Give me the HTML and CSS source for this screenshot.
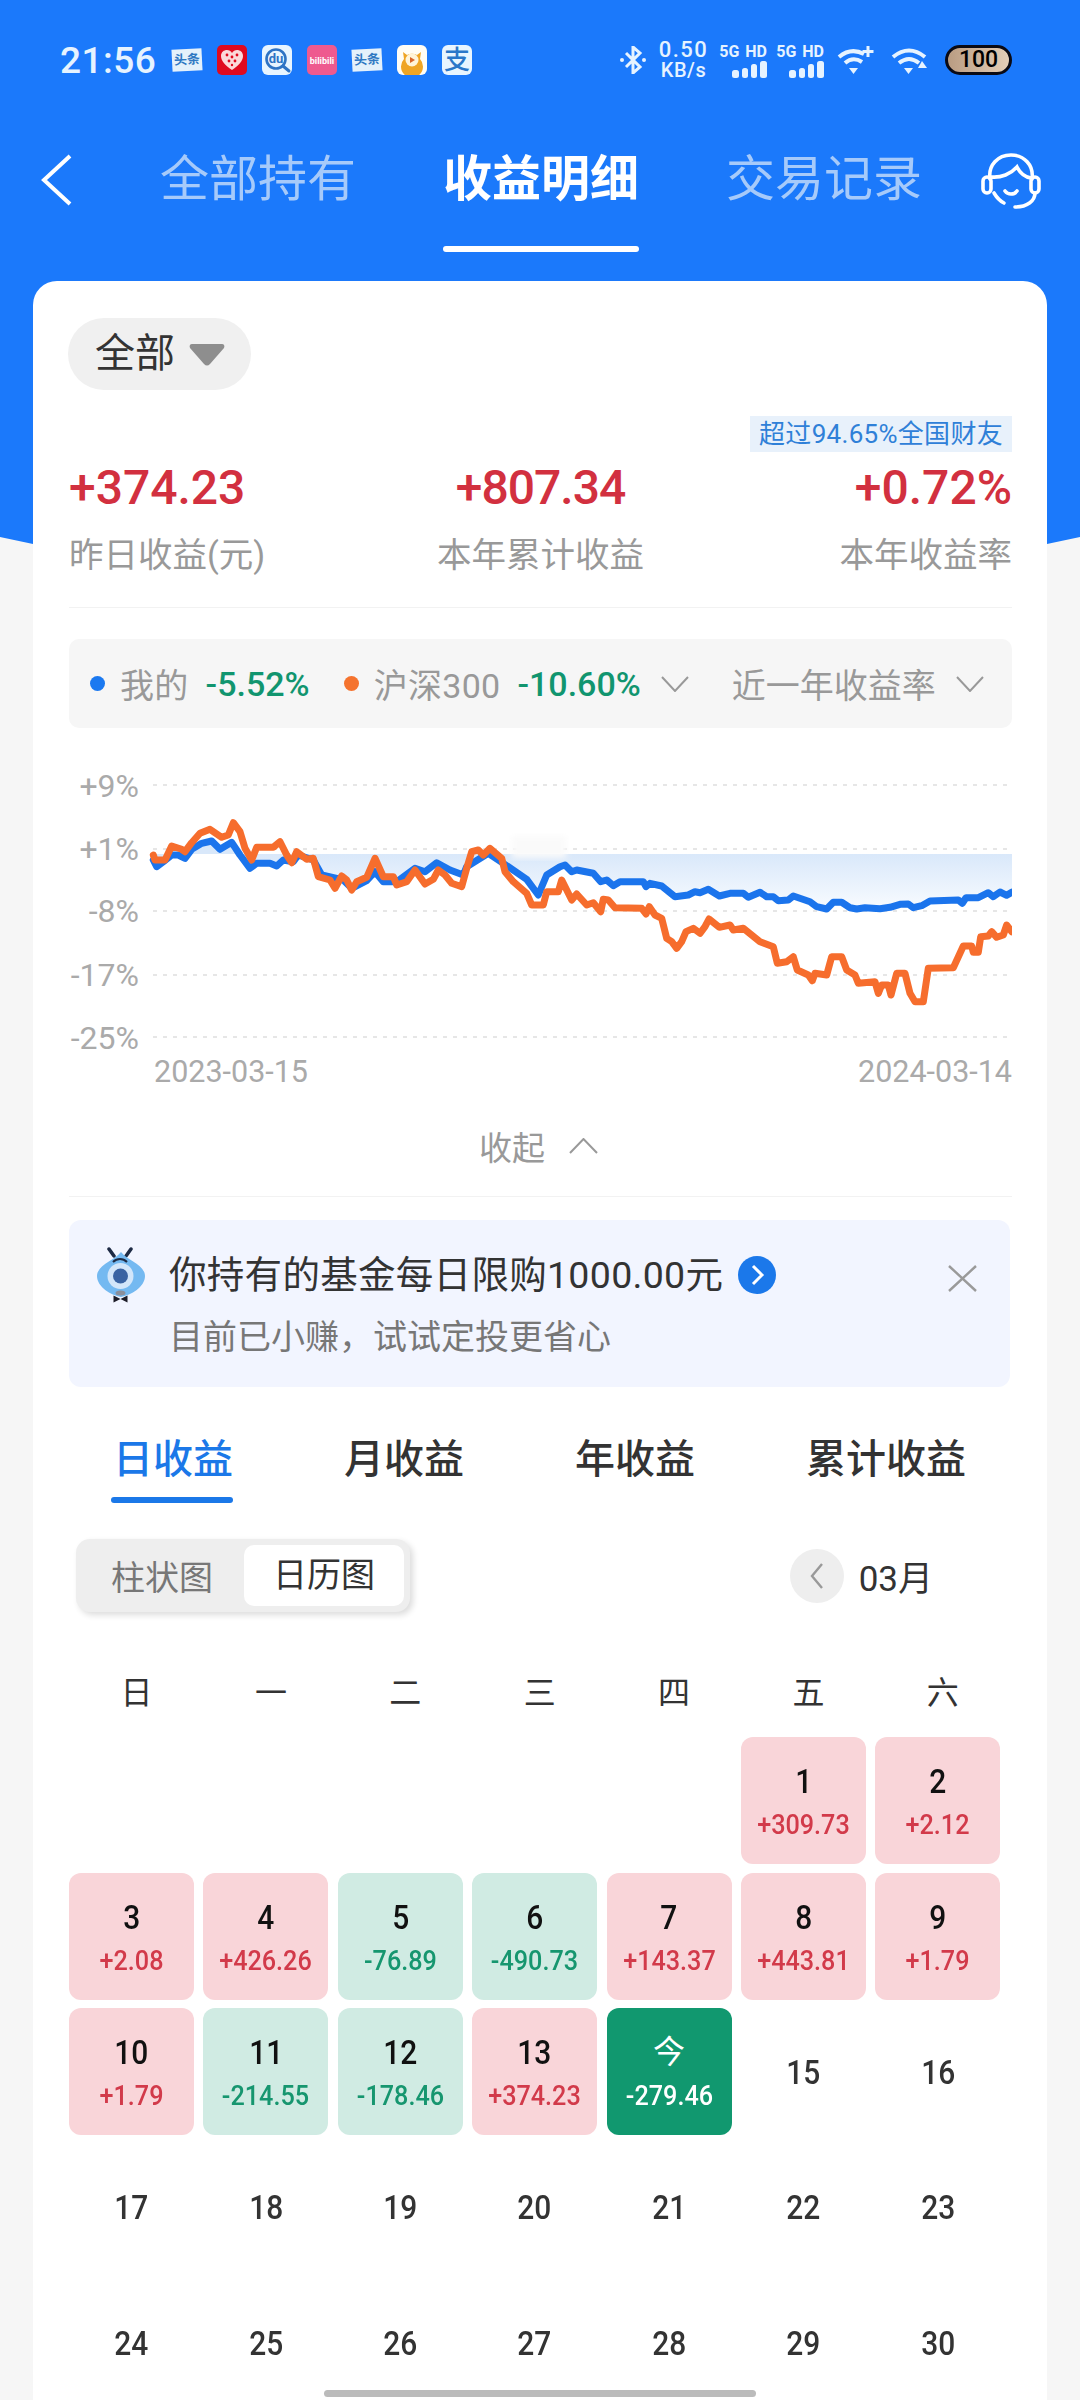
FILE: index.html
```html
<!DOCTYPE html>
<html lang="zh-CN">
<head>
    <meta charset="UTF-8">
    <meta name="viewport" content="width=device-width, initial-scale=1.0">
    <title>收益明细</title>
    <link rel="stylesheet" href="styles.css">
</head>
<body>
    <div class="header-bg"></div>

    <!-- Status bar -->
    <div class="status-bar">
        <span class="time">21:56</span>
        <div class="app-icons">
            <span class="toutiao">头条</span>
            <svg class="app-icon" viewBox="0 0 30 30"><rect width="30" height="30" rx="5" fill="#e00a1e"/><path d="M15 25C8 20 4 16 4 11c0-4 3-6 6-6 2 0 4 1 5 3 1-2 3-3 5-3 3 0 6 2 6 6 0 5-4 9-11 14z" fill="#fbdada"/><g fill="#e00a1e"><circle cx="10" cy="10" r="1.4"/><circle cx="15" cy="12" r="1.4"/><circle cx="20" cy="10" r="1.4"/><circle cx="12" cy="16" r="1.4"/><circle cx="18" cy="16" r="1.4"/><circle cx="15" cy="20" r="1.2"/></g></svg>
            <svg class="app-icon" viewBox="0 0 30 30"><rect width="30" height="30" rx="6" fill="#e8f5ff"/><circle cx="14" cy="14" r="9.5" fill="none" stroke="#2e73c4" stroke-width="2.6"/><path d="M21 21l6 5" stroke="#2e73c4" stroke-width="3" stroke-linecap="round"/><text x="14" y="18" text-anchor="middle" class="du-text">du</text></svg>
            <svg class="app-icon" viewBox="0 0 30 30"><rect width="30" height="30" rx="5" fill="#ee5a8f"/><text x="15" y="19" text-anchor="middle" class="bili-text">bilibili</text></svg>
            <span class="toutiao">头条</span>
            <svg class="app-icon" viewBox="0 0 30 30"><rect width="30" height="30" rx="6" fill="#fffdf5"/><path d="M6 7l4 3a11 11 0 0 1 10 0l4-3-1 7a11 11 0 1 1-16 0z" fill="#efa524"/><circle cx="15" cy="15" r="6.5" fill="#fff4d8"/><path d="M13 12l5 3-5 3z" fill="#d9652a"/></svg>
            <svg class="app-icon" viewBox="0 0 30 30"><rect width="30" height="30" rx="6" fill="#e8f5ff"/><text x="15" y="24" text-anchor="middle" class="zhi-text">支</text></svg>
        </div>
        <div class="status-right">
            <svg class="bt" viewBox="0 0 26 28"><path d="M6 7l14 14-7 6V1l7 6L6 21" fill="none" stroke="#e6f3ff" stroke-width="3"/><circle cx="2" cy="14" r="2" fill="#e6f3ff"/><circle cx="24" cy="14" r="2" fill="#e6f3ff"/></svg>
            <div class="speed"><span>0.50</span><span class="speed-unit">KB/s</span></div>
            <div class="signal">
                <span class="signal-label">5G HD</span>
                <svg class="bars" viewBox="0 0 35 17"><rect x="0" y="9" width="7" height="8" rx="2.5"/><rect x="10" y="7" width="6" height="10" rx="2.5"/><rect x="19" y="3" width="6" height="14" rx="2.5"/><rect x="28" y="0" width="7" height="17" rx="2.5"/></svg>
            </div>
            <div class="signal">
                <span class="signal-label">5G HD</span>
                <svg class="bars" viewBox="0 0 35 17"><rect x="0" y="9" width="7" height="8" rx="2.5"/><rect x="10" y="7" width="6" height="10" rx="2.5"/><rect x="19" y="3" width="6" height="14" rx="2.5"/><rect x="28" y="0" width="7" height="17" rx="2.5"/></svg>
            </div>
            <svg class="wifi-plus" viewBox="0 0 37 29"><path d="M2 11Q14 1 27 8M8 17Q16 10 25 16" fill="none" stroke="#e6f3ff" stroke-width="4"/><path d="M12 22h9l-4.500 6z" fill="#e6f3ff"/><path d="M31 0v11M25.500 5.500h11" stroke="#e6f3ff" stroke-width="3"/></svg>
            <svg class="wifi" viewBox="0 0 36 29"><path d="M2 11Q18 -2 34 11M8 17Q18 9 28 17" fill="none" stroke="#e6f3ff" stroke-width="4"/><path d="M13 22h9l-4.500 6z" fill="#e6f3ff"/><path d="M31 15l5 7h-9z" fill="#e6f3ff"/></svg>
            <div class="battery">100</div>
        </div>
    </div>

    <!-- Top navigation -->
    <div class="nav">
        <svg class="back" viewBox="0 0 31 52"><path d="M29 2L3 26l26 24" fill="none" stroke="#fff" stroke-width="4"/></svg>
        <div class="nav-tabs">
            <span class="nav-tab">全部持有</span>
            <span class="nav-tab active">收益明细</span>
            <span class="nav-tab">交易记录</span>
        </div>
        <svg class="headset" viewBox="0 0 60 56"><g fill="none" stroke="#fff" stroke-width="3.600" stroke-linecap="round"><path d="M9 26C7 12 17 2 30 2s23 10 21 24"/><path d="M10 24h0c10 1 20-3 26-10 3 6 8 10 14 11"/><rect x="2" y="24" width="8" height="16" rx="4"/><rect x="50" y="24" width="8" height="16" rx="4"/><path d="M13 40c3 5 6 8 10 10"/><path d="M54 40c0 8-8 14-20 14"/><path d="M24 38c3 4 9 4 12 0"/></g></svg>
    </div>

    <div class="card">
        <div class="filter-pill">
            <span>全部</span>
            <svg class="filter-arrow" viewBox="0 0 36 23"><path d="M3 1h30c2 0 3 2 2 4L21 21c-2 2-4 2-6 0L1 5C0 3 1 1 3 1z" fill="#8e8e8e"/></svg>
        </div>

        <div class="rank-row"><span class="rank-badge">超过94.65%全国财友</span></div>

        <div class="stats">
            <div class="stat">
                <div class="stat-value">+374.23</div>
                <div class="stat-label">昨日收益(元)</div>
            </div>
            <div class="stat center">
                <div class="stat-value">+807.34</div>
                <div class="stat-label">本年累计收益</div>
            </div>
            <div class="stat right">
                <div class="stat-value">+0.72%</div>
                <div class="stat-label">本年收益率</div>
            </div>
        </div>

        <!-- Legend above the chart -->
        <div class="legend">
            <i class="dot blue"></i>
            <span class="legend-name">我的</span>
            <span class="legend-value">-5.52%</span>
            <i class="dot orange"></i>
            <span class="legend-name">沪深300</span>
            <span class="legend-value">-10.60%</span>
            <svg class="legend-chevron first" viewBox="0 0 28 16"><path d="M1 1l13 14L27 1" fill="none" stroke="#999" stroke-width="2"/></svg>
            <span class="legend-name period">近一年收益率</span>
            <svg class="legend-chevron" viewBox="0 0 28 16"><path d="M1 1l13 14L27 1" fill="none" stroke="#999" stroke-width="2"/></svg>
        </div>

        <!-- Chart: the viewBox uses page coordinates -->
        <svg class="chart" viewBox="69 760 943 340">
            <defs>
                <linearGradient id="areaFill" gradientUnits="userSpaceOnUse" x1="0" y1="854" x2="0" y2="914">
                    <stop offset="0" stop-color="#d9e8fa"/>
                    <stop offset="1" stop-color="#fbfdff"/>
                </linearGradient>
                <filter id="soft"><feGaussianBlur stdDeviation="3"/></filter>
            </defs>
            <g class="grid">
                <line x1="153" y1="785" x2="1012" y2="785"/>
                <line x1="153" y1="849" x2="1012" y2="849"/>
                <line x1="153" y1="911" x2="1012" y2="911"/>
                <line x1="153" y1="975" x2="1012" y2="975"/>
                <line x1="153" y1="1037" x2="1012" y2="1037"/>
            </g>
            <polygon fill="url(#areaFill)" points="153,854 153,860 156.700,866.700 163.300,861.700 171.700,855 178.300,855 185,858.300 191.700,849.300 201.700,843.300 211.700,841 220,849.300 231.700,842.300 240,855 250,868.300 256.700,863.300 270,863.300 276.700,866 283.300,860 293.300,861.700 298.300,855 313.300,860 321.700,875 343.300,880 351.700,888.300 366.700,880.700 375,871.700 383.300,881.700 396.700,881.700 415,868.300 425,871.700 436.700,862.700 450,870 463.300,875 466.700,866.700 488.300,853.300 508.300,866.700 526.700,879.300 538.300,895 546.700,875 560,866.700 571.700,871.700 576.700,870 593.300,873.300 600.700,881.700 606.700,880 613.300,885.700 620,881.700 643.300,881.700 646,886.700 650,883.300 661.700,886 675,896.700 688.300,895 695,891.700 700,892.700 708.300,889.300 719.300,896 730,893.300 743.300,893.300 748.300,897.300 760,892.300 766.700,896.700 773.300,896.700 778.300,900.700 788.300,900 793.300,896 810,901.700 816.700,906.700 826.700,909 833.300,902.300 841.700,902.300 850,907.700 856.700,909 865,907.700 880,908.700 890,907.300 900,904.300 908.300,904 913.300,907.700 921.700,905.700 930,901 958.300,900 962.300,903.300 966,897.700 978.300,897.700 988.300,892.700 993.300,896.700 1000,892 1006.700,895.300 1012,892.300 1012,854"/>
            <rect x="512" y="836" width="54" height="22" fill="#fafafa" filter="url(#soft)"/>
            <polyline class="line-blue" points="153.300,860 156.700,866.700 163.300,861.700 171.700,855 178.300,855 185,858.300 191.700,849.300 201.700,843.300 211.700,841 220,849.300 231.700,842.300 240,855 250,868.300 256.700,863.300 270,863.300 276.700,866 283.300,860 293.300,861.700 298.300,855 313.300,860 321.700,875 343.300,880 351.700,888.300 366.700,880.700 375,871.700 383.300,881.700 396.700,881.700 415,868.300 425,871.700 436.700,862.700 450,870 463.300,875 466.700,866.700 488.300,853.300 508.300,866.700 526.700,879.300 538.300,895 546.700,875 560,866.700 565,865 571.700,871.700 576.700,870 593.300,873.300 600.700,881.700 606.700,880 613.300,885.700 620,881.700 643.300,881.700 646,886.700 650,883.300 661.700,886 675,896.700 688.300,895 695,891.700 700,892.700 708.300,889.300 719.300,896 730,893.300 743.300,893.300 748.300,897.300 760,892.300 766.700,896.700 773.300,896.700 778.300,900.700 788.300,900 793.300,896 810,901.700 816.700,906.700 826.700,909 833.300,902.300 841.700,902.300 850,907.700 856.700,909 865,907.700 880,908.700 890,907.300 900,904.300 908.300,904 913.300,907.700 921.700,905.700 930,901 958.300,900 962.300,903.300 966,897.700 978.300,897.700 988.300,892.700 993.300,896.700 1000,892 1006.700,895.300 1011.700,892.300"/>
            <polyline class="line-orange" points="153.300,855 155,860 165,860 171.700,846 181.700,849.300 185,851.700 191.700,842.700 200,833.300 210,829.300 221.700,837.300 228.300,835 233.300,822.700 240,831.700 245,848.300 251.700,860 256.700,847.300 273.300,847.300 280,841.700 286.700,855 291.700,862.700 296.700,851.700 306.700,859.300 313.300,858.300 318.300,876.700 330,880 335,888.300 341.700,876 346.700,880 351.700,890 356.700,881.700 366.700,877.300 375,858.300 383.300,876.700 393.300,876.700 396.700,885 406.700,881.700 415,870 425,884 433.300,879.300 438.300,870 445,875 451.700,883.300 461.700,886.700 466.700,868.300 471.700,851.700 478.300,850 483.300,855 490,848.300 501.700,858.300 505,871.700 513.300,881.700 526.700,893.300 531.700,905 543.300,905 546.700,891.700 558.300,891.700 561.700,880 571.700,900 576.700,894 586.700,905 593.300,902.700 600.700,911.700 603.300,899.300 608.300,900 615,907.700 641.700,908.300 646,914 649.300,906.700 655,915 661.700,918.300 666.700,938.300 671.700,941.700 676.700,948.300 681.700,941.700 686,931.700 693.300,928.300 700,933.300 705,926.700 709,919 719.300,927.300 730,925 733.300,930 743.300,928.300 760,941.700 773.300,946.700 777.300,963.300 786.700,961.700 793.300,956.700 797.300,970 808.300,975 812.300,980.700 815,973.300 826.700,975 831.700,956.700 841.700,956.700 846.700,970 855,975 858.300,983.300 875,981.700 878.300,993.300 881.700,985 888.300,985 891,995 896.700,973.300 905,973.300 910,993.300 915,1001.700 923.300,1001.700 928.300,968.300 953.300,967.700 963.300,946 971.700,946 973.300,952.300 978.300,952.300 980.700,936.700 988.300,936 991.700,931.700 996.700,937.300 1003.300,935 1006.700,925 1011.700,931.700"/>
            <g class="axis-y">
                <text x="139" y="797">+9%</text>
                <text x="139" y="860">+1%</text>
                <text x="139" y="922">-8%</text>
                <text x="139" y="986">-17%</text>
                <text x="139" y="1049">-25%</text>
            </g>
            <text class="axis-date" x="154" y="1082">2023-03-15</text>
            <text class="axis-date end" x="1012" y="1082">2024-03-14</text>
        </svg>

        <div class="collapse-row">
            <span>收起</span>
            <svg class="collapse-icon" viewBox="0 0 29 16"><path d="M1 15L14.500 1 28 15" fill="none" stroke="#999" stroke-width="2"/></svg>
        </div>

        <!-- Purchase limit notice -->
        <div class="notice">
            <svg class="mascot" viewBox="0 0 48 56">
                <path d="M12 2l5 7M34 2l-5 7" stroke="#1d2a44" stroke-width="3.500" stroke-linecap="round"/>
                <path d="M24 5c6 8 24 13 24 24 0 11-14 19-24 21C14 48 0 40 0 29 0 18 18 13 24 5z" fill="#74b9f1"/>
                <path d="M16 15c4-4 10-4 14 0" fill="none" stroke="#1d2a44" stroke-width="2"/>
                <circle cx="23.500" cy="29" r="13" fill="#d3e6fa"/>
                <circle cx="23.500" cy="29" r="7.500" fill="#3a63a3"/>
                <ellipse cx="23.500" cy="46" rx="5" ry="2.500" fill="#8a8f9c"/>
                <path d="M23.500 52l-7-3.500v7zM23.500 52l7-3.500v7z" fill="#1c1c28"/>
            </svg>
            <div class="notice-text">
                <div class="notice-title">
                    <span>你持有的基金每日限购1000.00元</span>
                    <svg class="notice-go" viewBox="0 0 38 38"><circle cx="19" cy="19" r="19" fill="#1b78ea"/><path d="M15 10l9 9-9 9" fill="none" stroke="#fff" stroke-width="3"/></svg>
                </div>
                <div class="notice-sub">目前已小赚，试试定投更省心</div>
            </div>
            <svg class="notice-close" viewBox="0 0 29 27"><path d="M1 1l27 25M28 1L1 26" stroke="#9a9a9a" stroke-width="2.400"/></svg>
        </div>

        <div class="period-tabs">
            <span class="period-tab active">日收益</span>
            <span class="period-tab">月收益</span>
            <span class="period-tab">年收益</span>
            <span class="period-tab">累计收益</span>
        </div>

        <div class="view-row">
            <div class="segment">
                <span class="segment-item">柱状图</span>
                <span class="segment-item active">日历图</span>
            </div>
            <div class="month">
                <span class="month-prev"><svg viewBox="0 0 14 28"><path d="M12 2L2 14l10 12" fill="none" stroke="#999" stroke-width="2.400"/></svg></span>
                <span>03月</span>
            </div>
        </div>

        <div class="week">
            <span>日</span><span>一</span><span>二</span><span>三</span><span>四</span><span>五</span><span>六</span>
        </div>

        <div class="calendar">
            <div class="day blank"></div>
            <div class="day blank"></div>
            <div class="day blank"></div>
            <div class="day blank"></div>
            <div class="day blank"></div>
            <div class="day up"><b>1</b><em>+309.73</em></div>
            <div class="day up"><b>2</b><em>+2.12</em></div>
            <div class="day up"><b>3</b><em>+2.08</em></div>
            <div class="day up"><b>4</b><em>+426.26</em></div>
            <div class="day down"><b>5</b><em>-76.89</em></div>
            <div class="day down"><b>6</b><em>-490.73</em></div>
            <div class="day up"><b>7</b><em>+143.37</em></div>
            <div class="day up"><b>8</b><em>+443.81</em></div>
            <div class="day up"><b>9</b><em>+1.79</em></div>
            <div class="day up"><b>10</b><em>+1.79</em></div>
            <div class="day down"><b>11</b><em>-214.55</em></div>
            <div class="day down"><b>12</b><em>-178.46</em></div>
            <div class="day up"><b>13</b><em>+374.23</em></div>
            <div class="day today"><b>今</b><em>-279.46</em></div>
            <div class="day future"><b>15</b></div>
            <div class="day future"><b>16</b></div>
            <div class="day future"><b>17</b></div>
            <div class="day future"><b>18</b></div>
            <div class="day future"><b>19</b></div>
            <div class="day future"><b>20</b></div>
            <div class="day future"><b>21</b></div>
            <div class="day future"><b>22</b></div>
            <div class="day future"><b>23</b></div>
            <div class="day future"><b>24</b></div>
            <div class="day future"><b>25</b></div>
            <div class="day future"><b>26</b></div>
            <div class="day future"><b>27</b></div>
            <div class="day future"><b>28</b></div>
            <div class="day future"><b>29</b></div>
            <div class="day future"><b>30</b></div>
        </div>
    </div>

    <div class="home-bar"></div>
</body>
</html>
```

FILE: styles.css
```css
* {
    margin: 0;
    padding: 0;
    box-sizing: border-box;
    font-family: Roboto, "Noto Sans CJK SC", sans-serif;
}

body {
    position: relative;
    width: 1080px;
    height: 2400px;
    overflow: hidden;
    background: #f6f6f6;
    color: #333;
}

svg {
    display: block;
    flex-shrink: 0;
}

/* Blue backdrop behind status bar, nav and top of the card */
.header-bg {
    position: absolute;
    top: 0;
    left: 0;
    width: 1080px;
    height: 544px;
    background: #1b79fb;
    clip-path: polygon(0 0, 100% 0, 100% 537px, 1047px 544px, 33px 544px, 0 537px);
}

/* Status bar */
.status-bar {
    position: relative;
    display: flex;
    align-items: center;
    height: 120px;
    padding: 0 68px 0 60px;
    color: #e6f3ff;
}

.time {
    width: 97px;
    font-size: 37px;
    font-weight: 500;
    letter-spacing: .5px;
    white-space: nowrap;
}

.app-icons {
    display: flex;
    align-items: center;
    gap: 15px;
    margin-left: 15px;
}

.app-icon {
    width: 30px;
    height: 30px;
}

.toutiao {
    width: 30px;
    height: 22px;
    background: #e4f1fb;
    color: #2f78c2;
    font-size: 13px;
    font-weight: 700;
    line-height: 22px;
    text-align: center;
    white-space: nowrap;
    transform: rotate(-3deg);
}

.du-text {
    font-family: Roboto, sans-serif;
    font-size: 13px;
    font-weight: 700;
    fill: #2e73c4;
}

.bili-text {
    font-family: Roboto, sans-serif;
    font-size: 9px;
    font-weight: 700;
    fill: #fff;
}

.zhi-text {
    font-size: 26px;
    font-weight: 500;
    fill: #2a77c9;
}

.status-right {
    display: flex;
    align-items: center;
    margin-left: auto;
}

.bt {
    width: 26px;
    height: 28px;
}

.speed {
    display: flex;
    flex-direction: column;
    align-items: center;
    width: 49px;
    margin-left: 13px;
    font-size: 22px;
    font-weight: 500;
    letter-spacing: 1.5px;
    line-height: 21px;
}

.speed-unit {
    font-size: 20px;
    letter-spacing: .5px;
}

.signal {
    display: flex;
    flex-direction: column;
    align-items: flex-end;
    width: 47px;
    margin-left: 12px;
}

.signal + .signal {
    margin-left: 10px;
}

.signal-label {
    font-size: 16px;
    font-weight: 700;
    line-height: 18px;
    word-spacing: 2px;
    white-space: nowrap;
}

.bars {
    width: 35px;
    height: 17px;
    fill: #e6f3ff;
}

.wifi-plus {
    width: 37px;
    height: 29px;
    margin-left: 13px;
}

.wifi {
    width: 36px;
    height: 29px;
    margin-left: 17px;
}

.battery {
    width: 67px;
    height: 30px;
    margin-left: 18px;
    border: 3px solid #0a0a14;
    border-radius: 15px;
    background: linear-gradient(90deg, #b99c82, #e4cfb8);
    color: #000;
    font-size: 23px;
    font-weight: 500;
    line-height: 24px;
    text-align: center;
}

/* Top navigation */
.nav {
    position: relative;
    display: flex;
    height: 132px;
    padding: 34px 39px 0 41px;
}

.back {
    width: 31px;
    height: 52px;
}

.nav-tabs {
    display: flex;
    gap: 87px;
    margin-left: 88px;
    margin-top: -4px;
}

.nav-tab {
    position: relative;
    height: 102px;
    color: #a6cafa;
    font-size: 49px;
    line-height: 60px;
    white-space: nowrap;
}

.nav-tab.active {
    color: #fff;
    font-weight: 700;
}

.nav-tab.active::after {
    content: "";
    position: absolute;
    left: 0;
    right: 0;
    bottom: 0;
    height: 6px;
    border-radius: 3px;
    background: #fff;
}

.headset {
    width: 60px;
    height: 56px;
    margin-left: auto;
    margin-top: -1px;
}

/* Main card */
.card {
    position: relative;
    height: 2200px;
    margin: 29px 33px 0;
    padding: 37px 35px 0 36px;
    border-radius: 24px 24px 0 0;
    background: #fff;
}

.filter-pill {
    display: flex;
    align-items: center;
    gap: 14px;
    width: 183px;
    height: 72px;
    margin-left: -1px;
    padding-left: 27px;
    border-radius: 36px;
    background: #f0f0f0;
    font-size: 40px;
    line-height: 72px;
}

.filter-arrow {
    width: 36px;
    height: 23px;
}

.rank-row {
    display: flex;
    justify-content: flex-end;
    margin-top: 26px;
}

.rank-badge {
    height: 36px;
    padding: 0 9px;
    background: #e8f1fb;
    color: #2f80d8;
    font-size: 26px;
    letter-spacing: .3px;
    line-height: 36px;
    white-space: nowrap;
}

.stats {
    display: grid;
    grid-template-columns: repeat(3, 1fr);
    padding-bottom: 30px;
    border-bottom: 1px solid #f2f2f2;
}

.stat-value {
    margin-top: 8px;
    color: #d2303f;
    font-size: 48px;
    font-weight: 500;
    line-height: 56px;
}

.stat.center .stat-value {
    letter-spacing: -1px;
}

.stat-label {
    margin-top: 17px;
    color: #999;
    font-size: 34.5px;
    line-height: 44px;
    white-space: nowrap;
}

.stat.center {
    text-align: center;
}

.stat.right {
    text-align: right;
}

/* Chart legend */
.legend {
    display: flex;
    align-items: center;
    height: 89px;
    margin-top: 31px;
    padding-left: 21px;
    border-radius: 10px;
    background: #f6f6f6;
}

.dot {
    width: 15px;
    height: 15px;
    border-radius: 50%;
}

.dot.blue {
    background: #1b79f0;
}

.dot.orange {
    margin-left: 34px;
    background: #f5732e;
}

.legend-name {
    margin-left: 15px;
    color: #999;
    font-size: 34px;
    letter-spacing: .3px;
    white-space: nowrap;
}

.legend-name.period {
    margin-left: 43px;
    letter-spacing: 0;
}

.legend-value {
    margin-left: 17px;
    color: #11956f;
    font-size: 34px;
    font-weight: 500;
    white-space: nowrap;
}

.legend-chevron {
    width: 28px;
    height: 16px;
    margin-left: 20px;
}

/* Chart */
.chart {
    width: 943px;
    height: 340px;
    margin-top: 32px;
}

.grid line {
    stroke: #e6e6e6;
    stroke-width: 2;
    stroke-dasharray: 4 6;
}

.line-blue,
.line-orange {
    fill: none;
    stroke-width: 7;
    stroke-linejoin: round;
    stroke-linecap: round;
}

.line-blue {
    stroke: #1b74ec;
}

.line-orange {
    stroke: #f66d2d;
}

.axis-y text {
    fill: #aaa;
    font-size: 32px;
    text-anchor: end;
}

.axis-date {
    fill: #aaa;
    font-size: 30.5px;
}

.axis-date.end {
    text-anchor: end;
}

.collapse-row {
    display: flex;
    align-items: center;
    justify-content: center;
    gap: 24px;
    height: 97px;
    padding-bottom: 4px;
    padding-right: 4px;
    border-bottom: 1px solid #f2f2f2;
    color: #999;
    font-size: 33px;
}

.collapse-icon {
    width: 29px;
    height: 16px;
}

/* Notice */
.notice {
    display: flex;
    width: 941px;
    height: 167px;
    margin-top: 23px;
    padding: 30px 33px 0 28px;
    border-radius: 12px;
    background: #f2f5ff;
}

.mascot {
    width: 48px;
    height: 56px;
    margin-top: -3px;
}

.notice-text {
    margin-left: 24px;
}

.notice-title {
    display: flex;
    align-items: center;
    gap: 15px;
    color: #333;
    font-size: 37.5px;
    letter-spacing: .3px;
    line-height: 50px;
    white-space: nowrap;
}

.notice-go {
    width: 38px;
    height: 38px;
}

.notice-sub {
    margin-top: 14px;
    color: #777;
    font-size: 34px;
    line-height: 46px;
    white-space: nowrap;
}

.notice-close {
    width: 29px;
    height: 27px;
    margin-left: auto;
    margin-top: 15px;
}

/* Period tabs */
.period-tabs {
    display: flex;
    gap: 111px;
    margin-top: 43px;
    padding-left: 44px;
}

.period-tab {
    position: relative;
    padding-bottom: 13px;
    font-size: 40px;
    font-weight: 500;
    line-height: 60px;
    white-space: nowrap;
}

.period-tab.active {
    color: #1b78e8;
}

.period-tab.active::after {
    content: "";
    position: absolute;
    left: -2px;
    right: 0;
    bottom: 0;
    height: 6px;
    border-radius: 3px;
    background: #1b78e8;
}

/* Chart type switch and month */
.view-row {
    display: flex;
    align-items: center;
    margin-top: 36px;
    padding: 0 79px 0 7px;
}

.segment {
    display: flex;
    align-items: center;
    width: 334px;
    height: 73px;
    padding: 0 6px 0 35px;
    border-radius: 14px;
    background: #eee;
    box-shadow: 3px 3px 6px rgba(0, 0, 0, .14);
    font-size: 34px;
}

.segment-item {
    color: #777;
    white-space: nowrap;
}

.segment-item.active {
    width: 160px;
    height: 61px;
    margin-left: 31px;
    border-radius: 10px;
    background: #fff;
    color: #333;
    line-height: 61px;
    text-align: center;
}

.month {
    display: flex;
    align-items: center;
    gap: 15px;
    margin-left: auto;
    font-size: 35px;
}

.month-prev {
    display: flex;
    align-items: center;
    justify-content: center;
    width: 54px;
    height: 54px;
    border-radius: 50%;
    background: #eee;
}

.month-prev svg {
    width: 14px;
    height: 28px;
}

/* Calendar */
.week,
.calendar {
    display: grid;
    grid-template-columns: repeat(7, 125px);
    column-gap: 9.4px;
}

.week {
    margin: 57px 0 0 5px;
    color: #333;
    font-size: 32px;
    line-height: 48px;
    text-align: center;
}

.calendar {
    grid-auto-rows: 127px;
    row-gap: 8.6px;
    margin-top: 20px;
}

.day {
    display: flex;
    flex-direction: column;
    align-items: center;
    padding-top: 24px;
    border-radius: 12px;
}

.day b {
    color: #111;
    font-size: 34px;
    font-weight: 500;
    line-height: 40px;
    transform: scaleX(.88);
}

.day em {
    margin-top: 6px;
    font-size: 28px;
    font-style: normal;
    font-weight: 500;
    line-height: 36px;
    white-space: nowrap;
    transform: scaleX(.9);
}

.day.up {
    background: #f9d5d9;
    color: #d23a4a;
}

.day.down {
    background: #d0ebe3;
    color: #16966f;
}

.day.today {
    background: #11986f;
    color: #fff;
}

.day.today b {
    color: #fff;
    font-size: 32px;
    font-weight: 400;
    transform: none;
}

.day.future {
    justify-content: center;
    padding-top: 0;
}

.day.future b {
    color: #333;
}

.home-bar {
    position: absolute;
    left: 324px;
    bottom: 3px;
    width: 432px;
    height: 7px;
    border-radius: 4px;
    background: #bbb;
}
```
